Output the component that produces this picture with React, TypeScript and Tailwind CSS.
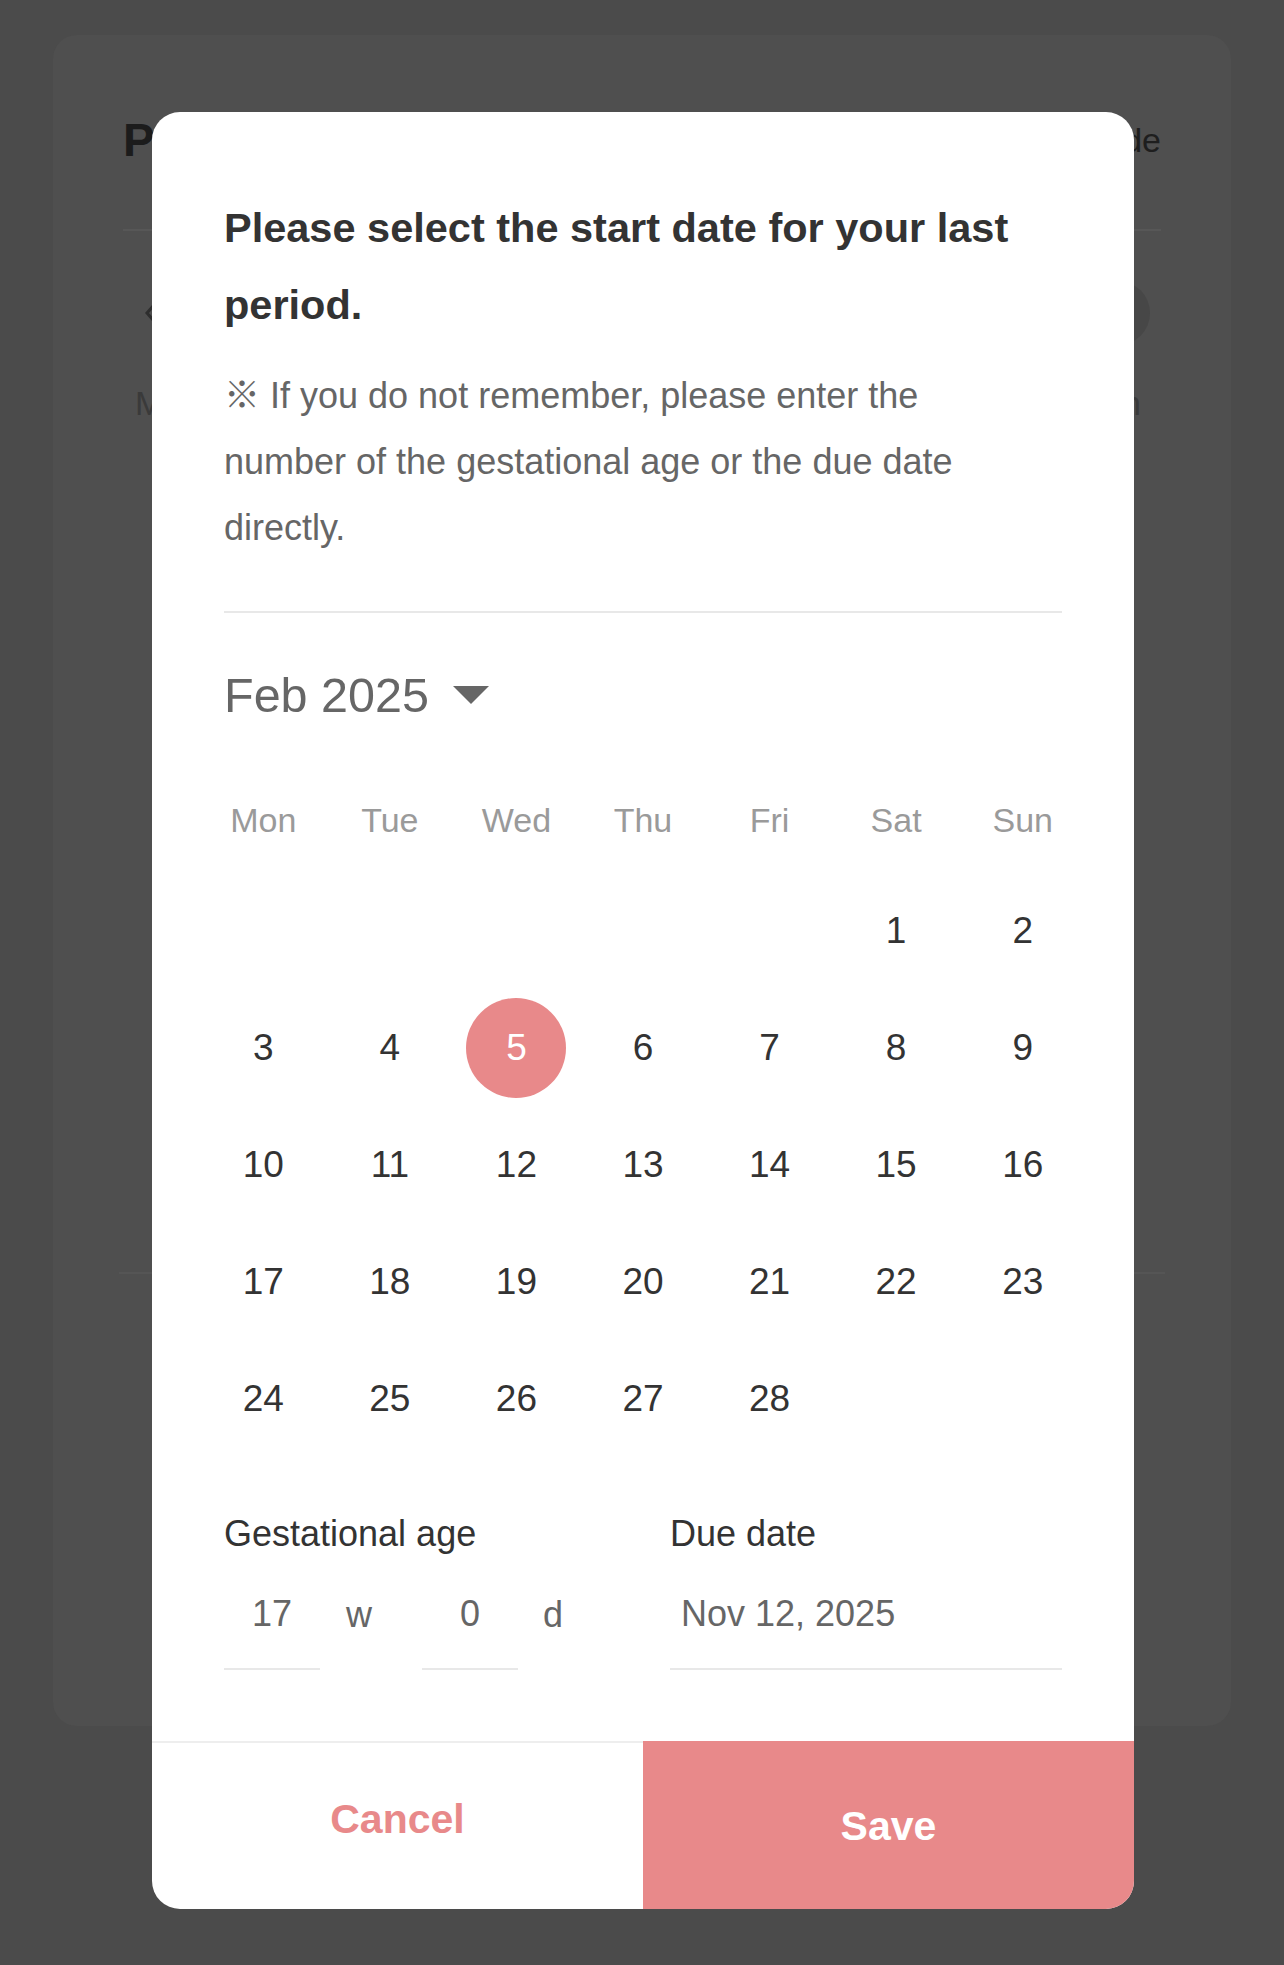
import React from 'react';

const weekDays = ['Mon', 'Tue', 'Wed', 'Thu', 'Fri', 'Sat', 'Sun'];

// Feb 2025 starts on a Saturday
const days: (number | null)[] = [
  null, null, null, null, null,
  ...Array.from({ length: 28 }, (_, i) => i + 1),
];

const selectedDay = 5;

const App: React.FC = () => {
  return (
    <div className="relative min-h-[1965px] w-full bg-[#4b4b4b] px-[53px] pt-[35px] font-['Liberation_Sans','Noto_Sans_CJK_KR',sans-serif]">
      {/* Page behind the dimmed overlay */}
      <div className="h-[1691px] rounded-[24px] bg-[#4f4f4f] px-[70px] pt-[60px]">
        <div className="flex h-[90px] items-center justify-between">
          <span className="text-[47px] font-bold text-[#1c1c1c]">P</span>
          <span className="text-[34px] text-[#1e1e1e]">de</span>
        </div>
        <div className="mt-[44px] h-[2px] bg-[#575757]" />
        <div className="mt-[42px] flex h-[80px] items-center justify-between">
          <svg width="14" height="22" viewBox="0 0 14 22" className="ml-[20px]">
            <path d="M11 3 L4 11 L11 19" fill="none" stroke="#2e2e2e" strokeWidth="3" />
          </svg>
          <div className="mr-[11px] h-[64px] w-[64px] rounded-full bg-[#474747]" />
        </div>
        <div className="mt-[30px] flex h-[40px] items-center justify-between text-[34px] text-[#3a3a3a]">
          <span className="pl-[12px]">M</span>
          <span className="pr-[20px]">n</span>
        </div>
        <div className="h-[849px]" />
        <div className="mx-[-4px] h-[2px] bg-[#555555]" />
      </div>

      {/* Modal */}
      <div className="absolute left-[152px] top-[112px] w-[982px] overflow-hidden rounded-[28px] bg-white">
        <div className="px-[72px] pt-[77px]">
          <h2 className="max-w-[800px] text-[41.5px] font-bold leading-[77px] text-[#333333]">
            Please select the start date for your last period.
          </h2>
          <p className="mt-[20px] max-w-[800px] text-[36px] leading-[66px] text-[#666666]">
            ※ If you do not remember, please enter the number of the gestational age or the due date directly.
          </p>
          <div className="mt-[50px] h-[2px] bg-[#e8e8e8]" />
          <div className="mt-[54px] flex h-[56px] items-center gap-[24px]">
            <span className="text-[48.5px] leading-[56px] text-[#666666]">Feb 2025</span>
            <svg width="36" height="18" viewBox="0 0 36 18">
              <path d="M0 0 H36 L18 18 Z" fill="#666666" />
            </svg>
          </div>
        </div>

        {/* Calendar */}
        <div className="mt-[72px] px-[48px]">
          <div className="grid h-[40px] grid-cols-7 items-center text-center text-[34px] text-[#9a9a9a]">
            {weekDays.map((d) => (
              <span key={d}>{d}</span>
            ))}
          </div>
          <div className="mt-[37px] grid grid-cols-7">
            {days.map((d, i) => (
              <div key={i} className="flex h-[117px] items-center justify-center text-[37px] text-[#333333]">
                {d === null ? null : d === selectedDay ? (
                  <span className="flex h-[100px] w-[100px] items-center justify-center rounded-full bg-[#e8898a] text-white">
                    {d}
                  </span>
                ) : (
                  <span>{d}</span>
                )}
              </div>
            ))}
          </div>
        </div>

        {/* Gestational age / due date */}
        <div className="mt-[55px] grid grid-cols-2 gap-x-[54px] px-[72px]">
          <div>
            <div className="h-[44px] text-[36px] leading-[44px] text-[#333333]">Gestational age</div>
            <div className="mt-[4px] flex h-[110px] items-stretch text-[36px] text-[#666666]">
              <div className="flex w-[96px] items-center justify-center border-b-2 border-[#e8e8e8]">17</div>
              <span className="flex w-[102px] items-center pl-[26px]">w</span>
              <div className="flex w-[96px] items-center justify-center border-b-2 border-[#e8e8e8]">0</div>
              <span className="flex items-center pl-[25px]">d</span>
            </div>
          </div>
          <div>
            <div className="h-[44px] text-[36px] leading-[44px] text-[#333333]">Due date</div>
            <div className="mt-[4px] flex h-[110px] items-center border-b-2 border-[#e8e8e8] pl-[11px] text-[36px] text-[#666666]">
              Nov 12, 2025
            </div>
          </div>
        </div>

        {/* Footer buttons */}
        <div className="mt-[71px] grid grid-cols-2">
          <button className="flex h-[168px] items-center justify-center border-t-2 border-[#eeeeee] pb-[12px] text-[41px] font-bold text-[#e8898a]">
            Cancel
          </button>
          <button className="flex h-[168px] items-center justify-center bg-[#e8898a] pt-[4px] text-[41px] font-bold text-white">
            Save
          </button>
        </div>
      </div>
    </div>
  );
};

export default App;
